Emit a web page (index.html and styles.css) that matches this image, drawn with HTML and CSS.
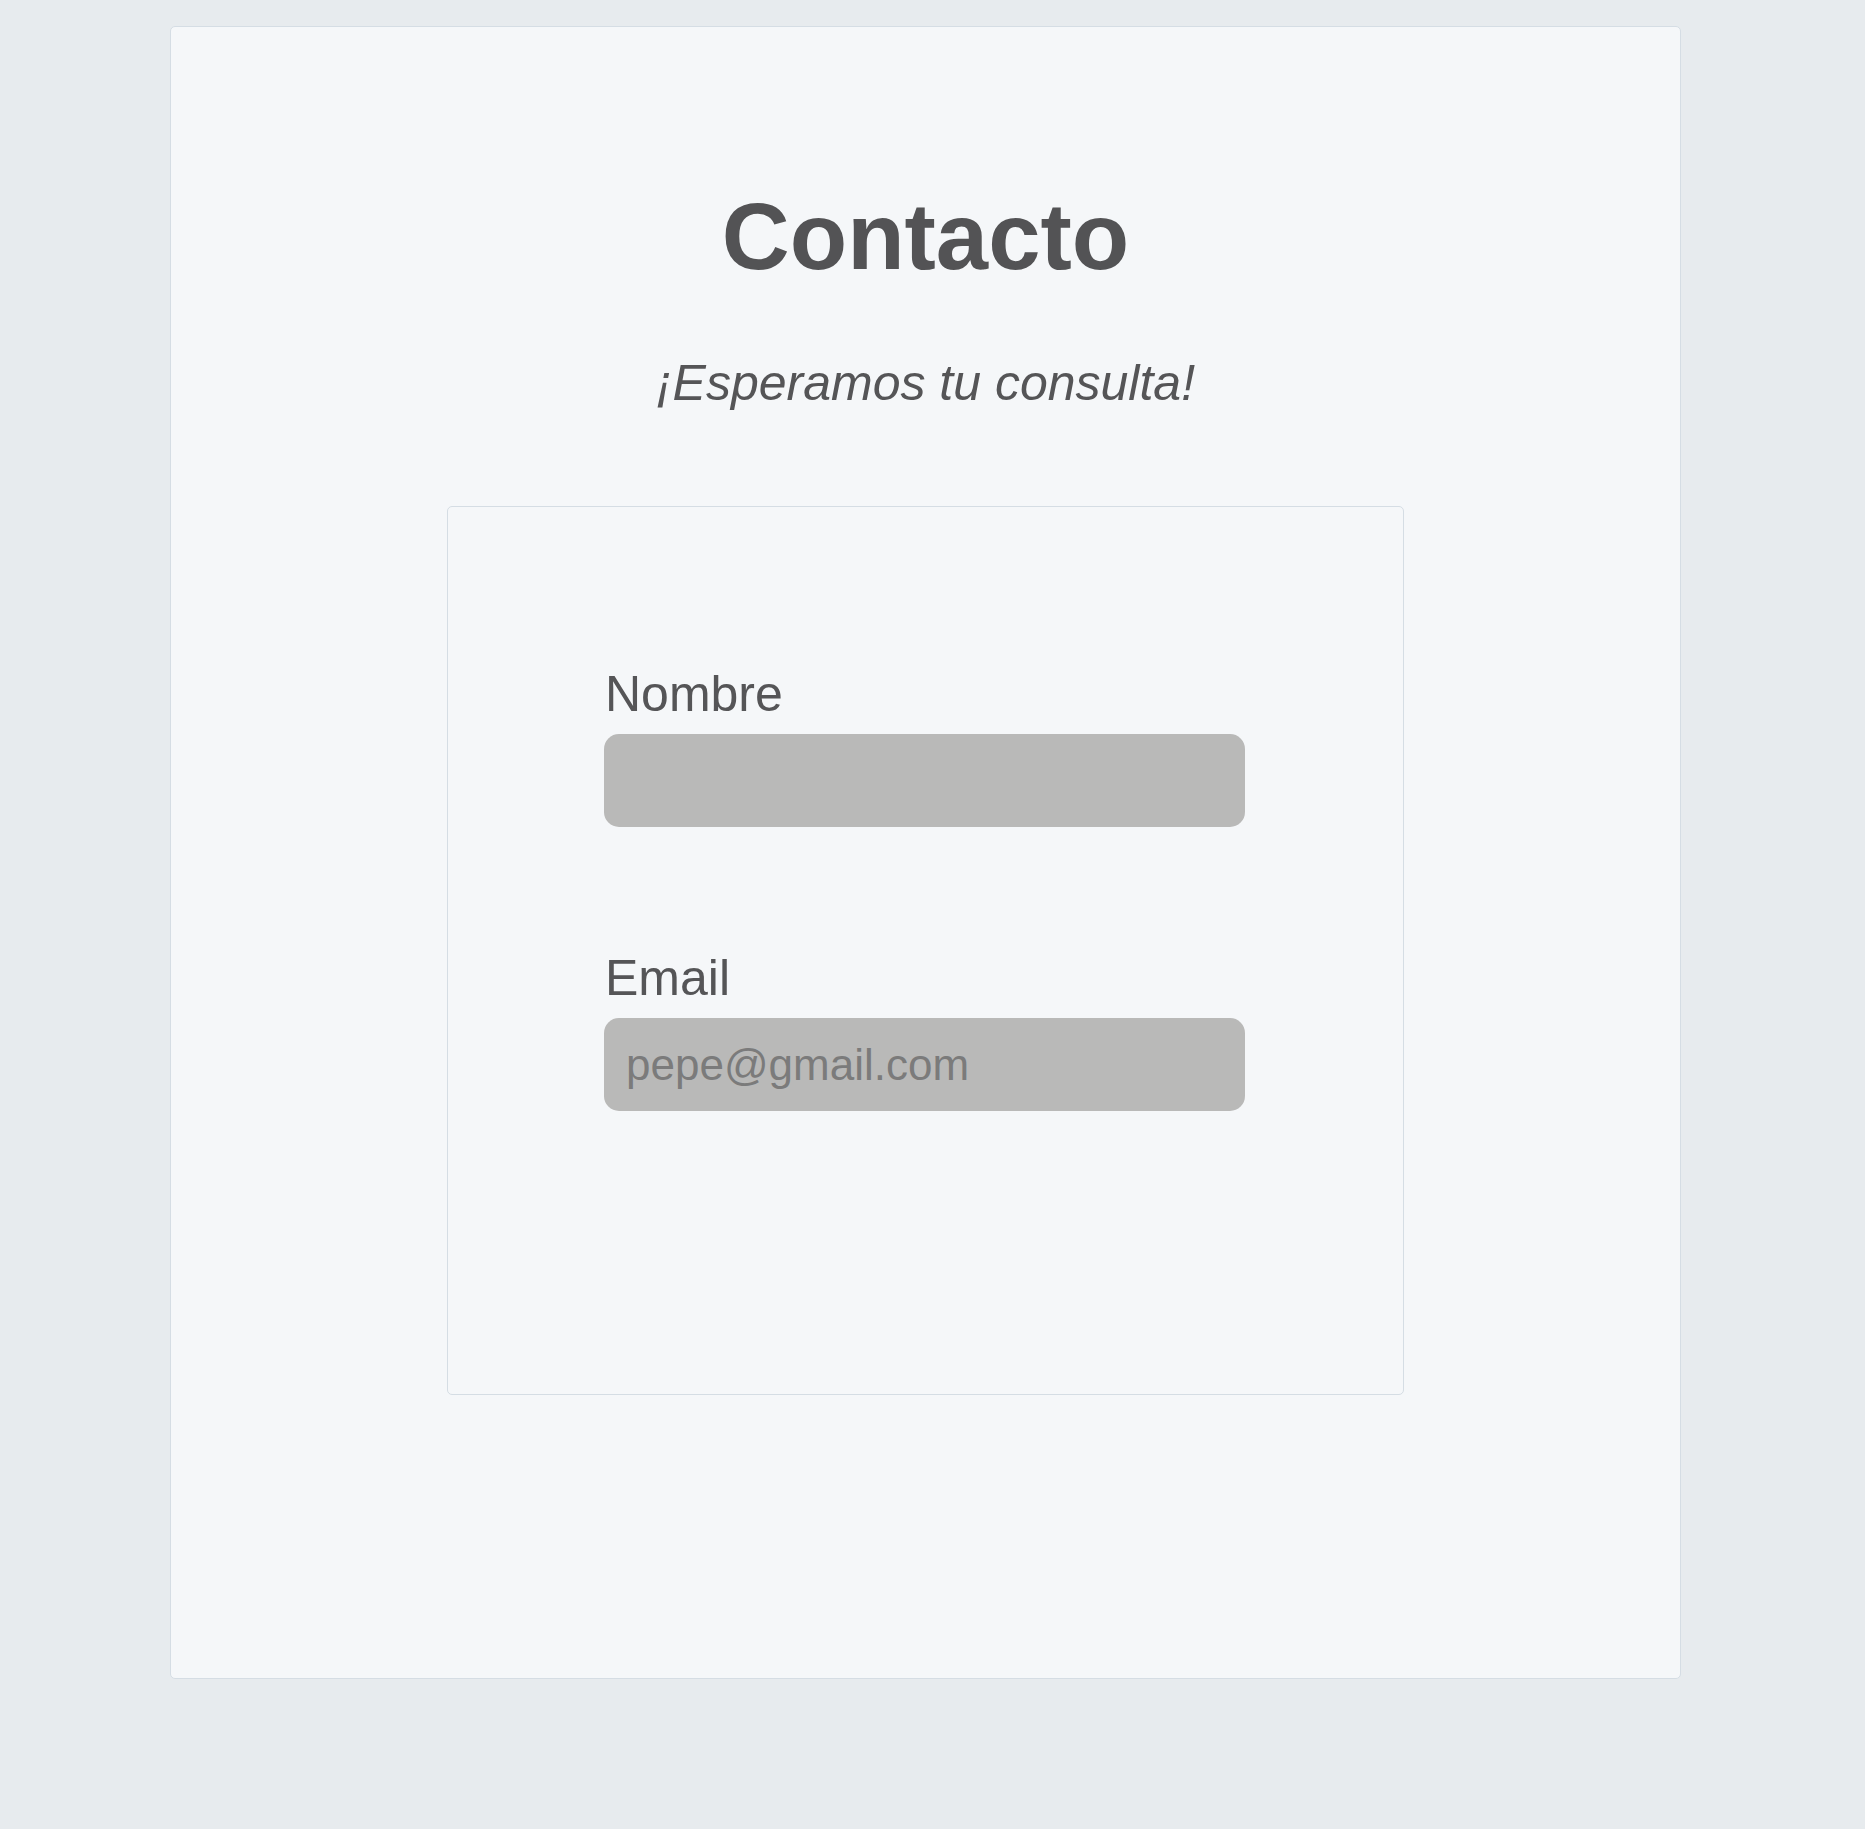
FILE: index.html
```html
<!DOCTYPE html>
<html lang="es">
<head>
<meta charset="utf-8">
<title>Contacto</title>
<link rel="stylesheet" href="styles.css">
</head>
<body>
<main class="page">
  <h1 class="title">Contacto</h1>
  <p class="subtitle">¡Esperamos tu consulta!</p>
  <form class="form-card">
    <div class="field">
      <label class="label" for="nombre">Nombre</label>
      <input class="input" id="nombre" type="text">
    </div>
    <div class="field">
      <label class="label" for="email">Email</label>
      <input class="input" id="email" type="email" placeholder="pepe@gmail.com">
    </div>
  </form>
</main>
</body>
</html>
```
FILE: styles.css
```css
html, body {
  margin: 0;
  padding: 0;
}
body {
  background: #e7ebee;
  font-family: "Liberation Sans", Arial, sans-serif;
  color: #555557;
}
.page {
  box-sizing: border-box;
  width: 1511px;
  height: 1653px;
  margin: 26px 0 0 170px;
  background: #f5f7f9;
  border: 1px solid #d5dde4;
  border-radius: 5px;
  padding-top: 163px;
  display: flex;
  flex-direction: column;
  align-items: center;
}
.title {
  margin: 0;
  font-size: 94px;
  line-height: 94px;
  font-weight: bold;
  color: #535355;
}
.subtitle {
  margin: 74px 0 0;
  font-size: 50px;
  line-height: 50px;
  font-style: italic;
  color: #555557;
}
.form-card {
  box-sizing: border-box;
  width: 957px;
  height: 889px;
  margin-top: 98px;
  border: 1px solid #d5dde4;
  border-radius: 5px;
  padding: 162px 0 0 156px;
  display: flex;
  flex-direction: column;
  gap: 126px;
}
.field {
  display: flex;
  flex-direction: column;
  align-items: flex-start;
}
.label {
  font-size: 50px;
  line-height: 50px;
  color: #555557;
  margin-left: 1px;
}
.input {
  box-sizing: border-box;
  width: 641px;
  height: 93px;
  margin-top: 15px;
  border: none;
  border-radius: 15px;
  background: #b9b9b8;
  padding: 0 22px;
  font-family: "Liberation Sans", Arial, sans-serif;
  font-size: 44px;
  color: #555;
  outline: none;
}
.input::placeholder {
  color: #7b7b7b;
}
```
